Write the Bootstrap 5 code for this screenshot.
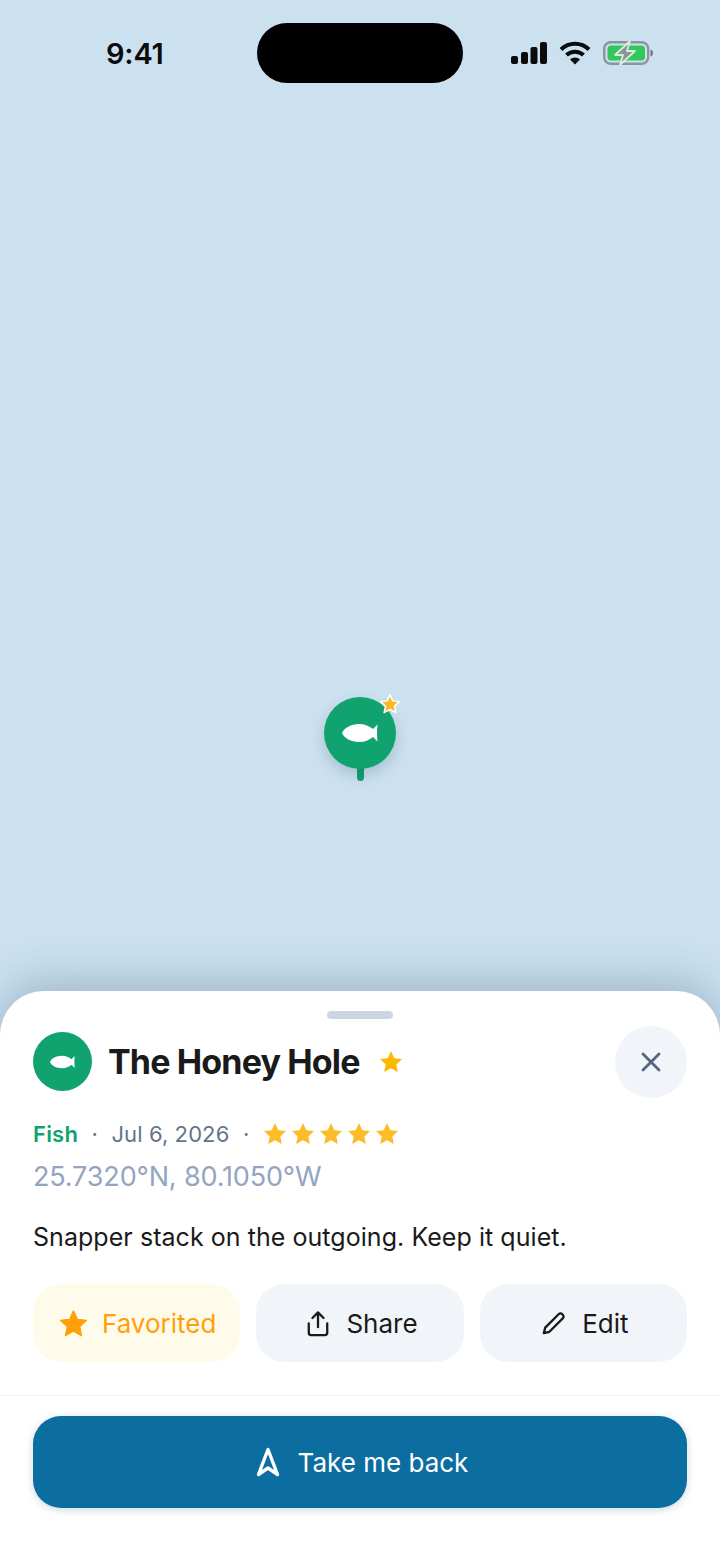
<!DOCTYPE html>
<html lang="en">
<head>
  <meta charset="UTF-8" />
  <meta name="viewport" content="width=device-width, initial-scale=1.0"/>
  <title>The Honey Hole</title>
  <link href="https://cdn.jsdelivr.net/npm/bootstrap@5.3.0/dist/css/bootstrap.min.css" rel="stylesheet"/>
  <style>
    html, body { height: 100%; }
    body { font-family: Inter, "Liberation Sans", sans-serif; background: #cbe1f0; color: #1a1a1a; overflow: hidden; }
    .phone-stage { position: relative; width: 720px; height: 1564px; overflow: hidden; }
    .map-area { height: 991px; }
    .status-row { height: 106px; padding: 0 67px 0 106px; }
    .status-time { font-size: 29px; font-weight: 600; color: #0b0b0b; width: 151px; letter-spacing: -.2px; line-height: 1; }
    .island { width: 206px; height: 60px; background: #000; border-radius: 30px; }
    .status-icons { gap: 12px; margin-left: 48px; }
    .pin-spot { position: absolute; left: 324px; top: 697px; width: 72px; height: 84px; }
    .pin-head { width: 72px; height: 72px; border-radius: 50%; background: #10a36f; box-shadow: 0 6px 14px rgba(30,60,80,.2); }
    .pin-tail { position: absolute; left: 32.5px; top: 69px; width: 7px; height: 15px; background: #10a36f; border-radius: 0 0 4px 4px; }
    .pin-star { position: absolute; left: 55px; top: -4px; }
    .sheet { height: 573px; background: #fff; border-radius: 44px 44px 0 0; box-shadow: 0 -8px 44px rgba(40,70,100,.28); position: relative; }
    .sheet-handle { width: 66px; height: 8px; border-radius: 4px; background: #cbd5e3; margin: 0 auto; position: relative; top: 20px; }
    .sheet-top { padding: 27px 33px 0; height: 116px; }
    .spot-avatar { width: 59px; height: 59px; border-radius: 50%; background: #10a36f; margin-right: 16px; margin-top: 6px; }
    .spot-head { height: 72px; }
    .spot-name { font-size: 34px; font-weight: 700; letter-spacing: -.85px; line-height: 1; margin: 0 19px 0 0; color: #1a1a1a; }
    .close-round { width: 72px; height: 72px; border-radius: 50%; background: #f1f4f9; border: 0; padding: 0; }
    .meta-row { padding: 0 33px; height: 38px; font-size: 22px; color: #64748b; }
    .meta-kind { color: #10a36f; font-weight: 600; letter-spacing: .2px; }
    .meta-date { letter-spacing: .1px; }
    .meta-dot { margin: 0 13.5px; }
    .stars-row { gap: 4px; }
    .coords { padding: 0 33px; font-size: 27px; letter-spacing: -.15px; color: #93a5c0; line-height: 32px; margin: 8px 0 0; }
    .note { padding: 0 33px; font-size: 25px; letter-spacing: .05px; color: #1a1a1a; line-height: 32px; margin: 28px 0 0; }
    .action-row { padding: 0 33px; margin-top: 31px; gap: 16px; grid-template-columns: repeat(3, 1fr); }
    .action-btn { height: 78px; border-radius: 28px; border: 0; background: #f1f4f9; font-size: 26px; color: #1a1a1a; gap: 16px; padding: 0 0 0 4px; }
    .action-fav { background: #fffbeb; color: #ff9f0a; gap: 14px; padding-left: 2px; }
    .sheet-rule { border-top: 1px solid #f1f4f9; margin-top: 33px; }
    .go-btn { display: flex; margin: 20px 33px 0; width: 654px; height: 92px; border-radius: 28px; border: 0; background: #0c6da0; color: #fff; font-size: 26px; gap: 18px; padding: 0 2px 0 6px; box-shadow: 0 2px 8px rgba(12,60,90,.2); }
  </style>
</head>
<body>
  <div class="phone-stage">
    <div class="map-area">
      <div class="status-row d-flex align-items-center">
        <div class="status-time">9:41</div>
        <div class="island"></div>
        <div class="status-icons d-flex align-items-center">
          <svg width="36" height="22" viewBox="0 0 36 22" fill="#0b0b0b"><rect x="0" y="14" width="7" height="8" rx="2"/><rect x="10" y="10" width="7" height="12" rx="2"/><rect x="19.500" y="5" width="7" height="17" rx="2"/><rect x="29" y="0" width="7" height="22" rx="2"/></svg>
          <svg width="32" height="24" viewBox="0 0 32 24" fill="none" stroke="#0b0b0b" stroke-width="4"><path d="M2 8.500a20 20 0 0 1 28 0"/><path d="M7.500 14a12.500 12.500 0 0 1 17 0"/><path d="M16 23.500l-5-5a7 7 0 0 1 10 0z" fill="#0b0b0b" stroke="none"/></svg>
          <svg width="50" height="24" viewBox="0 0 50 24"><rect x="1.200" y="1.200" width="44" height="21.600" rx="6.500" fill="none" stroke="#8b959b" stroke-width="2.400"/><rect x="4.500" y="4.500" width="37.500" height="15" rx="3.500" fill="#30c85a"/><path d="M47.500 8.500c1.600.6 2.500 1.900 2.500 3.500s-.9 2.900-2.500 3.500z" fill="#6e777d"/><path d="M27 0L12 14h8l-3 10 15-14h-8z" fill="#8b959b" stroke="#dcebe0" stroke-width="1.800" stroke-linejoin="round"/></svg>
        </div>
      </div>
      <div class="pin-spot">
        <div class="pin-tail"></div>
        <div class="pin-head d-flex align-items-center justify-content-center position-relative">
          <svg width="36" height="20" viewBox="0 0 36 20" fill="#fff"><path d="M0 10C2 5 9 1 17 1c6 0 10 2 14 5l4.500-4.500c-.6 5.500-.6 11.500 0 17L31 14c-4 3-8 5-14 5C9 19 2 15 0 10z"/></svg>
        </div>
        <svg class="pin-star" width="22" height="22" viewBox="0 0 24 24"><path d="M12 2l3 6.600 7.200.8-5.300 4.900 1.500 7.100L12 17.800l-6.400 3.600 1.500-7.100L1.800 9.400 9 8.600z" fill="#fbb724" stroke="#fff" stroke-width="1.600" stroke-linejoin="round"/></svg>
      </div>
    </div>

    <div class="sheet">
      <div class="sheet-handle"></div>
      <div class="sheet-top d-flex align-items-start">
        <div class="spot-avatar d-flex align-items-center justify-content-center">
          <svg width="25" height="14" viewBox="0 0 36 20" fill="#fff"><path d="M0 10C2 5 9 1 17 1c6 0 10 2 14 5l4.500-4.500c-.6 5.500-.6 11.500 0 17L31 14c-4 3-8 5-14 5C9 19 2 15 0 10z"/></svg>
        </div>
        <div class="spot-head d-flex align-items-center">
          <h1 class="spot-name">The Honey Hole</h1>
          <svg width="24" height="24" viewBox="0 0 24 24"><path d="M12 1l3.300 7.200 7.700.9-5.700 5.300 1.600 7.700L12 18.200l-6.900 3.900 1.600-7.700L1 9.100l7.700-.9z" fill="#fbb900"/></svg>
        </div>
        <button class="close-round ms-auto d-flex align-items-center justify-content-center" aria-label="Close">
          <svg width="20" height="20" viewBox="0 0 20 20" fill="none" stroke="#55657d" stroke-width="2.800" stroke-linecap="round"><path d="M2 2l16 16M18 2L2 18"/></svg>
        </button>
      </div>
      <div class="meta-row d-flex align-items-center">
        <span class="meta-kind">Fish</span><span class="meta-dot">·</span><span class="meta-date">Jul 6, 2026</span><span class="meta-dot">·</span>
        <span class="stars-row d-flex">
          <svg width="24" height="24" viewBox="0 0 24 24"><path d="M12 1l3.300 7.200 7.700.9-5.700 5.300 1.600 7.700L12 18.200l-6.900 3.900 1.600-7.700L1 9.100l7.700-.9z" fill="#fcbc27"/></svg>
          <svg width="24" height="24" viewBox="0 0 24 24"><path d="M12 1l3.300 7.200 7.700.9-5.700 5.300 1.600 7.700L12 18.200l-6.900 3.900 1.600-7.700L1 9.100l7.700-.9z" fill="#fcbc27"/></svg>
          <svg width="24" height="24" viewBox="0 0 24 24"><path d="M12 1l3.300 7.200 7.700.9-5.700 5.300 1.600 7.700L12 18.200l-6.900 3.900 1.600-7.700L1 9.100l7.700-.9z" fill="#fcbc27"/></svg>
          <svg width="24" height="24" viewBox="0 0 24 24"><path d="M12 1l3.300 7.200 7.700.9-5.700 5.300 1.600 7.700L12 18.200l-6.900 3.900 1.600-7.700L1 9.100l7.700-.9z" fill="#fcbc27"/></svg>
          <svg width="24" height="24" viewBox="0 0 24 24"><path d="M12 1l3.300 7.200 7.700.9-5.700 5.300 1.600 7.700L12 18.200l-6.900 3.900 1.600-7.700L1 9.100l7.700-.9z" fill="#fcbc27"/></svg>
        </span>
      </div>
      <p class="coords">25.7320°N, 80.1050°W</p>
      <p class="note">Snapper stack on the outgoing. Keep it quiet.</p>
      <div class="action-row d-grid">
        <button class="action-btn action-fav d-flex align-items-center justify-content-center">
          <svg width="29" height="29" viewBox="0 0 24 24"><path d="M12 1.500l3.200 7 7.600.9-5.600 5.200 1.500 7.600L12 18.400l-6.700 3.800 1.500-7.600L1.200 9.400l7.600-.9z" fill="#ff9f0a" stroke="#ff9f0a" stroke-linejoin="round"/></svg>
          Favorited
        </button>
        <button class="action-btn d-flex align-items-center justify-content-center">
          <svg width="24" height="27" viewBox="0 0 26 28" fill="none" stroke="#1a1a1a" stroke-width="2.500" stroke-linecap="round" stroke-linejoin="round"><path d="M13 18V2M7 8l6-6 6 6M3 14v10a2.500 2.500 0 0 0 2.500 2.500h15A2.500 2.500 0 0 0 23 24V14"/></svg>
          Share
        </button>
        <button class="action-btn d-flex align-items-center justify-content-center">
          <svg width="24" height="24" viewBox="0 0 26 26" fill="none" stroke="#1a1a1a" stroke-width="2.500" stroke-linejoin="round"><path d="M2 24l1.500-6L18 3.500a2.800 2.800 0 0 1 4 0l.5.5a2.800 2.800 0 0 1 0 4L8 22.500z"/></svg>
          Edit
        </button>
      </div>
      <div class="sheet-rule"></div>
      <button class="go-btn align-items-center justify-content-center">
        <svg width="24" height="30" viewBox="0 0 24 30" fill="none" stroke="#fff" stroke-width="3.400" stroke-linejoin="round"><path d="M12 2.500L2.500 27.500 12 21l9.500 6.500z"/></svg>
        Take me back
      </button>
    </div>
  </div>
  <script src="https://cdn.jsdelivr.net/npm/bootstrap@5.3.0/dist/js/bootstrap.bundle.min.js"></script>
</body>
</html>
